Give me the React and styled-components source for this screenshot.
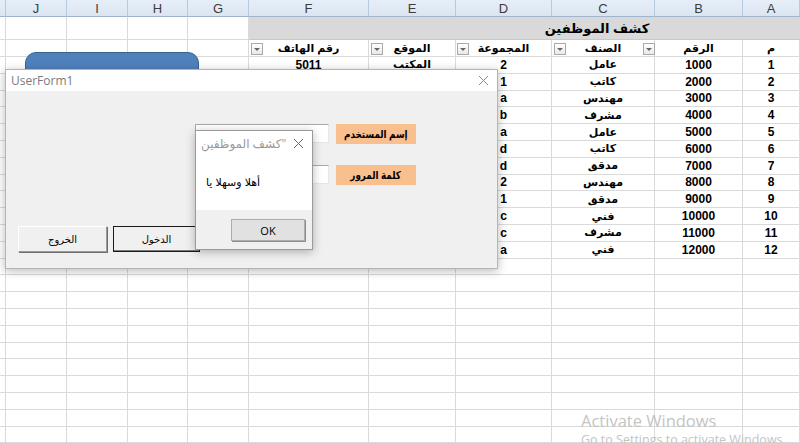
import React from "react";
import styled, { createGlobalStyle } from "styled-components";

const COLS = "6px 61px 61px 60px 61px 120px 87px 96px 103px 88px 57px";
const SHEET_FONT = `"Liberation Sans", "DejaVu Sans", Arial, sans-serif`;
const UI_FONT = `"Open Sans", "DejaVu Sans", sans-serif`;

const letters = ["", "J", "I", "H", "G", "F", "E", "D", "C", "B", "A"];

const headers = [
  { text: "رقم الهاتف", drop: 2 },
  { text: "الموقع", drop: 2 },
  { text: "المجموعة", drop: 1 },
  { text: "الصنف", drop: 2 },
  { text: "الرقم", drop: -12 },
  { text: "م" },
];

const rows = [
  ["5011", "المكتب", "2", "عامل", "1000", "1"],
  ["5012", "المكتب", "1", "كاتب", "2000", "2"],
  ["5013", "المكتب", "a", "مهندس", "3000", "3"],
  ["5014", "المكتب", "b", "مشرف", "4000", "4"],
  ["5015", "المكتب", "a", "عامل", "5000", "5"],
  ["5016", "المكتب", "d", "كاتب", "6000", "6"],
  ["5017", "المكتب", "d", "مدقق", "7000", "7"],
  ["5018", "المكتب", "2", "مهندس", "8000", "8"],
  ["5019", "المكتب", "1", "مدقق", "9000", "9"],
  ["5020", "المكتب", "c", "فني", "10000", "10"],
  ["5021", "المكتب", "c", "مشرف", "11000", "11"],
  ["5022", "المكتب", "a", "فني", "12000", "12"],
];

const GlobalStyle = createGlobalStyle`
  html, body {
    margin: 0;
    padding: 0;
    background: #ffffff;
    overflow: hidden;
  }
`;

const Page = styled.div`
  position: relative;
  width: 800px;
  height: 443px;
  overflow: hidden;
  background: #ffffff;
  font-family: ${SHEET_FONT};
`;

const Row = styled.div`
  display: grid;
  grid-template-columns: ${COLS};
  height: ${(p) => p.$h}px;
`;

const ColHead = styled.div`
  display: flex;
  align-items: center;
  justify-content: center;
  background: linear-gradient(#e6eef8, #dbe5f1);
  border-right: 1px solid #b9c9dc;
  border-bottom: 1px solid #9fb4cd;
  color: #3c3c3c;
  font-size: 13px;
`;

const Cell = styled.div`
  position: relative;
  display: flex;
  align-items: center;
  justify-content: center;
  border-right: 1px solid #dadada;
  border-bottom: 1px solid #dadada;
  color: #000;
  font-size: ${(p) => (p.$small ? 11 : 12)}px;
  font-weight: bold;
  white-space: nowrap;
  overflow: visible;
`;

const TitleCell = styled.div`
  grid-column: span 6;
  display: flex;
  align-items: center;
  justify-content: center;
  padding-left: 145px;
  background: #d9d9d9;
  border-bottom: 1px solid #c8c8c8;
  font-size: 13px;
  font-weight: bold;
  color: #000;
`;

const DropButton = styled.span`
  position: absolute;
  left: ${(p) => p.$x}px;
  top: 3px;
  width: 10px;
  height: 10px;
  border: 1px solid #a9a9a9;
  background: linear-gradient(#ffffff, #e9e9e9);
  &::after {
    content: "";
    position: absolute;
    left: 2px;
    top: 4px;
    border-left: 3px solid transparent;
    border-right: 3px solid transparent;
    border-top: 3px solid #666;
  }
`;

const Shape = styled.div`
  position: absolute;
  left: 25px;
  top: 52px;
  width: 174px;
  height: 40px;
  border-radius: 11px;
  background: #4f81bd;
  border: 1px solid #3a6290;
  box-sizing: border-box;
`;

const Window = styled.div`
  position: absolute;
  left: ${(p) => p.$x}px;
  top: ${(p) => p.$y}px;
  width: ${(p) => p.$w}px;
  height: ${(p) => p.$h}px;
  box-sizing: border-box;
  display: flex;
  flex-direction: column;
  background: #f0f0f0;
  border: 1px solid ${(p) => (p.$dark ? "#9a9a9a" : "#b4b4b4")};
  box-shadow: 0 2px 9px rgba(0, 0, 0, 0.28);
  font-family: ${UI_FONT};
`;

const TitleBar = styled.div`
  display: flex;
  align-items: center;
  justify-content: space-between;
  height: ${(p) => p.$h}px;
  flex-shrink: 0;
  padding: 0 8px 0 5px;
  background: #ffffff;
  color: ${(p) => p.$color};
  font-size: 12px;
`;

const FormBody = styled.div`
  display: flex;
  flex-direction: column;
  padding: 33px 0 0 12px;
`;

const Fields = styled.div`
  display: flex;
  flex-direction: column;
  gap: 21px;
  margin-left: 177px;
`;

const FieldRow = styled.div`
  display: flex;
  align-items: flex-start;
  gap: 7px;
`;

const TextBox = styled.div`
  width: 134px;
  height: 19px;
  box-sizing: border-box;
  background: #ffffff;
  border-top: 1px solid #a8a8a8;
  border-left: 1px solid #a8a8a8;
  border-right: 1px solid #e6e6e6;
  border-bottom: 1px solid #e6e6e6;
`;

const FieldLabel = styled.div`
  width: 80px;
  height: 20px;
  display: flex;
  align-items: center;
  justify-content: center;
  overflow: hidden;
  white-space: nowrap;
  background: #fabf8f;
  font-family: ${SHEET_FONT};
  font-size: 11px;
  font-weight: bold;
  color: #000;
`;

const LabelText = styled.span`
  display: inline-block;
  transform: scaleX(0.8);
`;

const ButtonRow = styled.div`
  display: flex;
  gap: 6px;
  margin-top: 41px;
`;

const FormButton = styled.div`
  width: ${(p) => p.$w}px;
  height: 26px;
  box-sizing: border-box;
  display: flex;
  align-items: center;
  justify-content: center;
  background: #f0f0f0;
  font-family: ${SHEET_FONT};
  font-size: 10px;
  color: #000;
  border: 1px solid;
  border-color: ${(p) => (p.$primary ? "#1a1a1a" : "#ffffff #9a9a9a #9a9a9a #ffffff")};
  box-shadow: ${(p) =>
    p.$primary ? "inset -1px -1px 0 #7a7a7a" : "1px 1px 0 #6e6e6e"};
`;

const MsgBody = styled.div`
  display: flex;
  align-items: center;
  height: 55px;
  padding-left: 10px;
  background: #ffffff;
  font-family: ${SHEET_FONT};
  font-size: 11px;
  color: #000;
`;

const MsgFooter = styled.div`
  flex: 1;
  display: flex;
  justify-content: flex-end;
  align-items: flex-start;
  padding: 9px 7px 0 0;
  background: #f0f0f0;
`;

const OkButton = styled.div`
  width: 74px;
  height: 22px;
  box-sizing: border-box;
  display: flex;
  align-items: center;
  justify-content: center;
  background: #e1e1e1;
  border: 1px solid #adadad;
  box-shadow: 1px 1px 0 #8e8e8e;
  font-family: ${UI_FONT};
  font-size: 11px;
  color: #000;
`;

const Watermark = styled.div`
  position: absolute;
  left: 581px;
  top: 410px;
  display: flex;
  flex-direction: column;
  color: #c4c4c4;
  font-family: ${UI_FONT};
  pointer-events: none;
`;

const WatermarkTitle = styled.span`
  font-size: 16.5px;
  line-height: 22px;
`;

const WatermarkSub = styled.span`
  font-size: 12.5px;
  line-height: 16px;
  white-space: nowrap;
`;

const CloseIcon = ({ color }) => (
  <svg width="11" height="11" viewBox="0 0 11 11">
    <path d="M1 1 L10 10 M10 1 L1 10" stroke={color} strokeWidth="1" fill="none" />
  </svg>
);

const EmptyCells = () => (
  <>
    <Cell />
    <Cell />
    <Cell />
    <Cell />
    <Cell />
  </>
);

const App = () => {
  const emptyRows = Array.from({ length: 12 });

  return (
    <Page>
      <GlobalStyle />

      <Row $h={17}>
        {letters.map((l, i) => (
          <ColHead key={i}>{l}</ColHead>
        ))}
      </Row>

      <Row $h={23}>
        <EmptyCells />
        <TitleCell>كشف الموظفين</TitleCell>
      </Row>

      <Row $h={17}>
        <EmptyCells />
        {headers.map((h, i) => (
          <Cell key={i} $small>
            {h.drop !== undefined && <DropButton $x={h.drop} />}
            {h.text}
          </Cell>
        ))}
      </Row>

      {rows.map((r, i) => (
        <Row key={i} $h={16.8}>
          <EmptyCells />
          <Cell>{r[0]}</Cell>
          <Cell $small>{r[1]}</Cell>
          <Cell>{r[2]}</Cell>
          <Cell $small>{r[3]}</Cell>
          <Cell>{r[4]}</Cell>
          <Cell>{r[5]}</Cell>
        </Row>
      ))}

      {emptyRows.map((_, i) => (
        <Row key={"e" + i} $h={16.8}>
          <EmptyCells />
          <Cell />
          <Cell />
          <Cell />
          <Cell />
          <Cell />
          <Cell />
        </Row>
      ))}

      <Shape />

      {/* UserForm1 */}
      <Window $x={5} $y={69} $w={493} $h={200}>
        <TitleBar $h={21} $color="#7a7a7a">
          <span>UserForm1</span>
          <CloseIcon color="#8a8a8a" />
        </TitleBar>
        <FormBody>
          <Fields>
            <FieldRow>
              <TextBox />
              <FieldLabel>
                <LabelText>إسم المستخدم</LabelText>
              </FieldLabel>
            </FieldRow>
            <FieldRow>
              <TextBox />
              <FieldLabel>
                <LabelText>كلمة المرور</LabelText>
              </FieldLabel>
            </FieldRow>
          </Fields>
          <ButtonRow>
            <FormButton $w={89}>الخروج</FormButton>
            <FormButton $w={87} $primary>
              الدخول
            </FormButton>
          </ButtonRow>
        </FormBody>
      </Window>

      {/* message box */}
      <Window $x={195} $y={130} $w={118} $h={120} $dark>
        <TitleBar $h={24} $color="#9a9a9a">
          <span>كشف الموظفين"</span>
          <CloseIcon color="#6a6a6a" />
        </TitleBar>
        <MsgBody>أهلا وسهلا يا</MsgBody>
        <MsgFooter>
          <OkButton>OK</OkButton>
        </MsgFooter>
      </Window>

      <Watermark>
        <WatermarkTitle>Activate Windows</WatermarkTitle>
        <WatermarkSub>Go to Settings to activate Windows.</WatermarkSub>
      </Watermark>
    </Page>
  );
};

export default App;
